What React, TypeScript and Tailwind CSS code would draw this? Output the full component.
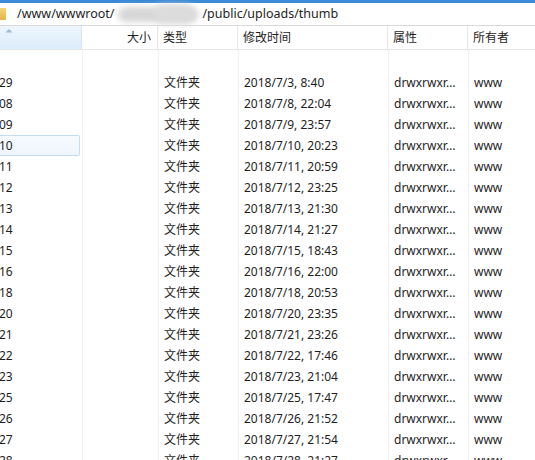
const rows = [
  ["29", "2018/7/3, 8:40"],
  ["08", "2018/7/8, 22:04"],
  ["09", "2018/7/9, 23:57"],
  ["10", "2018/7/10, 20:23"],
  ["11", "2018/7/11, 20:59"],
  ["12", "2018/7/12, 23:25"],
  ["13", "2018/7/13, 21:30"],
  ["14", "2018/7/14, 21:27"],
  ["15", "2018/7/15, 18:43"],
  ["16", "2018/7/16, 22:00"],
  ["18", "2018/7/18, 20:53"],
  ["20", "2018/7/20, 23:35"],
  ["21", "2018/7/21, 23:26"],
  ["22", "2018/7/22, 17:46"],
  ["23", "2018/7/23, 21:04"],
  ["25", "2018/7/25, 17:47"],
  ["26", "2018/7/26, 21:52"],
  ["27", "2018/7/27, 21:54"],
  ["28", "2018/7/28, 21:27"],
];

const font = "font-['Noto_Sans','Noto_Sans_CJK_SC',sans-serif]";

function Row({ name, date, selected }: { name: string; date: string; selected?: boolean }) {
  return (
    <div className="flex h-[21px] shrink-0 items-center text-[12px] text-[#1e1e1e]">
      <div className="w-[82px] shrink-0 pr-[2px] h-full">
        <div
          className={`h-full flex items-center rounded-r-[2px] ${
            selected ? "border border-l-0 border-[#c4dcf3] bg-gradient-to-b from-[#f7fbff] to-[#edf5fd]" : ""
          }`}
        >
          <span className="ml-[-1px]">{name}</span>
        </div>
      </div>
      <div className="w-[76px] shrink-0 h-full border-l border-[#f0f0f0]" />
      <div className="w-[80px] shrink-0 h-full border-l border-[#f0f0f0] pl-[5px] flex items-center">文件夹</div>
      <div className="w-[150px] shrink-0 h-full border-l border-[#f0f0f0] pl-[5px] flex items-center">{date}</div>
      <div className="w-[80px] shrink-0 h-full border-l border-[#f0f0f0] pl-[5px] flex items-center">drwxrwxr…</div>
      <div className="flex-1 h-full border-l border-[#f0f0f0] pl-[5px] flex items-center">www</div>
    </div>
  );
}

export default function App() {
  return (
    <div className={`w-[535px] h-[460px] overflow-hidden bg-white flex flex-col ${font}`}>
      <div className="h-[3px] shrink-0 bg-[#3a8ad8]" />
      {/* address bar */}
      <div className="h-[23px] shrink-0 flex items-center border-b border-[#d9d9d9] text-[12.5px] text-[#1e1e1e]">
        <div className="w-[6px] h-[12px] mr-[11px] rounded-r-[1px] bg-gradient-to-b from-[#f5d67a] to-[#e2b54a]" />
        <span>/www/wwwroot/</span>
        <div className="relative w-[88px] h-[20px]">
          <div className="absolute left-[4px] top-[3px] w-[80px] h-[15px] rounded-full bg-[#d6d6d6] blur-[3px]" />
          <div className="absolute left-[40px] top-[1px] w-[40px] h-[18px] rounded-full bg-[#dcdcdc] blur-[3px]" />
        </div>
        <span>/public/uploads/thumb</span>
      </div>
      {/* header */}
      <div className="h-[24px] shrink-0 flex text-[12px] text-[#1e1e1e] border-b border-[#e5e5e5]">
        <div className="w-[82px] shrink-0 relative bg-gradient-to-b from-[#eef6fd] to-[#dcecfb] border-r border-[#d5e5f5]">
          <svg className="absolute left-[5px] top-[2px]" width="8" height="5" viewBox="0 0 8 5">
            <path d="M0.5 4.5 L4 1 L7.5 4.5 Z" fill="#9fb8d4" />
          </svg>
        </div>
        <div className="w-[76px] shrink-0 flex items-center justify-end pr-[6px] border-r border-[#e5e5e5]">大小</div>
        <div className="w-[80px] shrink-0 flex items-center pl-[5px] border-r border-[#e5e5e5]">类型</div>
        <div className="w-[150px] shrink-0 flex items-center pl-[5px] border-r border-[#e5e5e5]">修改时间</div>
        <div className="w-[80px] shrink-0 flex items-center pl-[5px] border-r border-[#e5e5e5]">属性</div>
        <div className="flex-1 flex items-center pl-[5px]">所有者</div>
      </div>
      {/* body */}
      <div className="flex flex-col">
        <div className="flex h-[22px] shrink-0">
          <div className="w-[82px] shrink-0" />
          <div className="w-[76px] shrink-0 border-l border-[#f0f0f0]" />
          <div className="w-[80px] shrink-0 border-l border-[#f0f0f0]" />
          <div className="w-[150px] shrink-0 border-l border-[#f0f0f0]" />
          <div className="w-[80px] shrink-0 border-l border-[#f0f0f0]" />
          <div className="flex-1 border-l border-[#f0f0f0]" />
        </div>
        {rows.map(([n, d]) => (
          <Row key={n} name={n} date={d} selected={n === "10"} />
        ))}
      </div>
    </div>
  );
}
